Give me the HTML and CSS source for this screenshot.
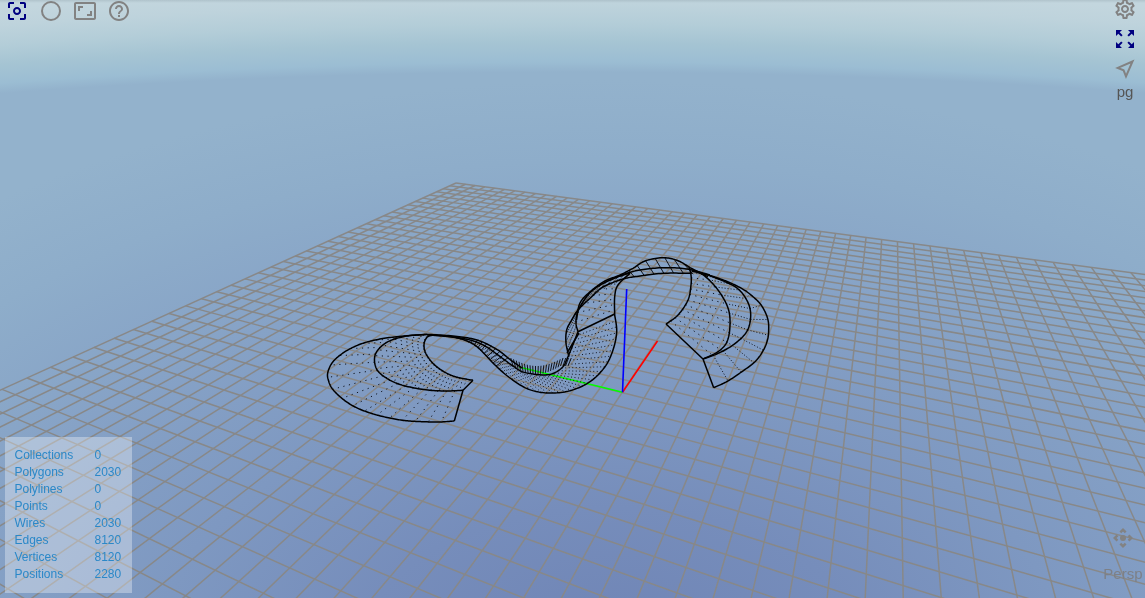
FILE: index.html
```html
<!DOCTYPE html>
<html lang="en">
<head>
<meta charset="utf-8">
<title>3D Viewer</title>
<link rel="stylesheet" href="styles.css">
</head>
<body>
<main class="viewer">
  <canvas class="scene" id="scene" width="1145" height="598"></canvas>
  <div class="overlay">
    <header class="row row-top">
      <nav class="toolbar">
        <svg class="icon active" viewBox="0 0 24 24"><path d="M5 15H3v4c0 1.100.9 2 2 2h4v-2H5v-4zM5 5h4V3H5c-1.100 0-2 .9-2 2v4h2V5zm14-2h-4v2h4v4h2V5c0-1.100-.9-2-2-2zm0 16h-4v2h4c1.100 0 2-.9 2-2v-4h-2v4zM12 8c-2.210 0-4 1.790-4 4s1.790 4 4 4 4-1.790 4-4-1.790-4-4-4zm0 6c-1.100 0-2-.9-2-2s.9-2 2-2 2 .9 2 2-.9 2-2 2z"/></svg>
        <svg class="icon" viewBox="0 0 24 24"><path d="M12 2a10 10 0 1 0 0 20a10 10 0 1 0 0-20zm0 18a8 8 0 1 1 0-16a8 8 0 1 1 0 16z"/></svg>
        <svg class="icon" viewBox="0 0 24 24"><path d="M19 12h-2v3h-3v2h5v-5zM7 9h3V7H5v5h2V9zm14-6H3c-1.100 0-2 .9-2 2v14c0 1.100.9 2 2 2h18c1.100 0 2-.9 2-2V5c0-1.100-.9-2-2-2zm0 16.010H3V4.990h18v14.020z"/></svg>
        <svg class="icon" viewBox="0 0 24 24"><path d="M11 18h2v-2h-2v2zm1-16C6.480 2 2 6.480 2 12s4.480 10 10 10 10-4.480 10-10S17.520 2 12 2zm0 18c-4.410 0-8-3.590-8-8s3.590-8 8-8 8 3.590 8 8-3.590 8-8 8zm0-14c-2.210 0-4 1.790-4 4h2c0-1.100.9-2 2-2s2 .9 2 2c0 2-3 1.750-3 5h2c0-2.250 3-2.500 3-5 0-2.210-1.790-4-4-4z"/></svg>
      </nav>
      <nav class="sidebar">
        <svg class="icon" viewBox="0 0 24 24"><path fill-rule="evenodd" d="M19.430 12.980c.04-.32.07-.64.07-.98 0-.34-.03-.66-.07-.98l2.110-1.650c.19-.15.24-.42.12-.64l-2-3.460c-.09-.16-.26-.25-.44-.25-.06 0-.12.01-.17.03l-2.490 1c-.52-.4-1.080-.73-1.690-.98l-.38-2.650C14.460 2.180 14.250 2 14 2h-4c-.25 0-.46.18-.49.42l-.38 2.650c-.61.25-1.170.59-1.690.98l-2.490-1c-.06-.02-.12-.03-.18-.03-.17 0-.34.09-.43.25l-2 3.460c-.13.22-.07.49.12.64l2.110 1.650c-.04.32-.07.65-.07.98 0 .33.03.66.07.98l-2.110 1.650c-.19.15-.24.42-.12.64l2 3.460c.09.16.26.25.44.25.06 0 .12-.01.17-.03l2.490-1c.52.4 1.080.73 1.690.98l.38 2.650c.03.24.24.42.49.42h4c.25 0 .46-.18.49-.42l.38-2.650c.61-.25 1.170-.59 1.690-.98l2.490 1c.06.02.12.03.18.03.17 0 .34-.09.43-.25l2-3.460c.12-.22.07-.49-.12-.64l-2.110-1.650zm-1.980-1.710c.04.31.05.52.05.73 0 .21-.02.43-.05.73l-.14 1.130.89.7 1.080.84-.7 1.210-1.270-.51-1.040-.42-.9.68c-.43.32-.84.56-1.250.73l-1.060.43-.16 1.130-.2 1.350h-1.400l-.19-1.350-.16-1.130-1.060-.43c-.43-.18-.83-.41-1.230-.71l-.91-.7-1.060.43-1.270.51-.7-1.210 1.080-.84.89-.7-.14-1.130c-.03-.31-.05-.54-.05-.74s.02-.43.05-.73l.14-1.130-.89-.7-1.080-.84.7-1.210 1.270.51 1.040.42.9-.68c.43-.32.84-.56 1.250-.73l1.060-.43.16-1.130.2-1.350h1.390l.19 1.350.16 1.130 1.060.43c.43.18.83.41 1.230.71l.91.7 1.060-.43 1.270-.51.7 1.210-1.070.85-.89.7.14 1.130zM12 8c-2.210 0-4 1.790-4 4s1.790 4 4 4 4-1.790 4-4-1.790-4-4-4zm0 6c-1.100 0-2-.9-2-2s.9-2 2-2 2 .9 2 2-.9 2-2 2z"/></svg>
        <svg class="icon active" viewBox="0 0 24 24"><path d="M15 3l2.300 2.300-2.890 2.870 1.420 1.420L18.700 6.700 21 9V3zM3 9l2.300-2.300 2.870 2.890 1.420-1.420L6.700 5.300 9 3H3zm6 12l-2.300-2.300 2.890-2.870-1.420-1.420L5.300 17.300 3 15v6zm12-6l-2.300 2.300-2.870-2.890-1.420 1.420 2.890 2.870L15 21h6z"/></svg>
        <svg class="icon" viewBox="0 0 24 24"><path class="outline" d="M19.500 4.500L4.700 10.900L10.600 13.300L13 19.300Z"/></svg>
        <span class="mode">pg</span>
      </nav>
    </header>
    <footer class="row row-bottom">
      <dl class="stats">
        <dt>Collections</dt><dd>0</dd>
        <dt>Polygons</dt><dd>2030</dd>
        <dt>Polylines</dt><dd>0</dd>
        <dt>Points</dt><dd>0</dd>
        <dt>Wires</dt><dd>2030</dd>
        <dt>Edges</dt><dd>8120</dd>
        <dt>Vertices</dt><dd>8120</dd>
        <dt>Positions</dt><dd>2280</dd>
      </dl>
      <div class="camera">
        <svg class="icon" viewBox="0 0 24 24"><path d="M15.540 5.540L13.770 7.300 12 5.540 10.230 7.300 8.460 5.540 12 2zm2.920 10l-1.760-1.770L18.460 12l-1.760-1.770 1.760-1.770L22 12zm-10 2.920l1.770-1.760L12 18.460l1.770-1.760 1.770 1.760L12 22zm-2.920-10l1.760 1.770L5.540 12l1.760 1.770-1.760 1.770L2 12z"/><circle cx="12" cy="12" r="3"/></svg>
        <span>Persp</span>
      </div>
    </footer>
  </div>
</main>
<script src="scene.js"></script>
</body>
</html>
```

FILE: styles.css
```css
body {
  margin: 0;
  overflow: hidden;
  font-family: "Liberation Sans", Arial, sans-serif;
}

.viewer {
  display: grid;
  width: 1145px;
  height: 598px;
  background:
    linear-gradient(rgba(120, 140, 150, 0.25), transparent 3px),
    radial-gradient(circle 7900px at 575px 7802px, transparent 7730px, #9bbdd3 7740px, #a5c4d3 7759px, #b3cdd8 7778px, #bed3dc 7798px, #c3d6de 7815px),
    radial-gradient(ellipse 1000px 570px at 610px 650px, #6f84b5 0%, #768dbb 25%, #7e98c1 45%, #86a2c6 66%, #8eadca 86%, #93b2cc 100%);
}

.scene,
.overlay {
  grid-area: 1 / 1;
}

.overlay {
  display: flex;
  flex-direction: column;
  justify-content: space-between;
  height: 598px;
}

.row {
  display: flex;
  justify-content: space-between;
}

.row-top {
  align-items: flex-start;
}

.row-bottom {
  align-items: flex-end;
}

.icon {
  display: block;
  width: 24px;
  height: 24px;
  fill: #828282;
}

.active {
  fill: #000080;
}

.outline {
  fill: none;
  stroke: #828282;
  stroke-width: 2;
}

.toolbar {
  display: flex;
  gap: 10px;
  margin: -1px 0 0 5px;
}

.sidebar {
  display: flex;
  flex-direction: column;
  align-items: center;
  gap: 6px;
  margin: -3px 8px 0 0;
}

.mode {
  margin-top: -4px;
  font-size: 15px;
  line-height: 18px;
  color: #555;
}

.stats {
  display: grid;
  grid-template-columns: 80px 37.500px;
  grid-auto-rows: 17px;
  box-sizing: border-box;
  width: 127px;
  height: 156px;
  margin: 0 0 5px 5px;
  padding: 10px 0 0 9.500px;
  background: rgba(255, 255, 255, 0.33);
  color: #2b88c8;
  font-size: 12px;
  line-height: 17px;
}

.stats dd {
  margin: 0;
}

.camera {
  display: flex;
  flex-direction: column;
  align-items: center;
  gap: 15px;
  margin: 0 2.500px 15px 0;
  font-size: 15px;
  line-height: 18px;
  color: #7d8087;
}
```

FILE: scene.js
```js
const ctx = document.getElementById('scene').getContext('2d');

// Ground plane: homography from four grid nodes to screen positions.
const nodes = [
  [-25, -25, 456, 183],
  [24, -25, 1131, 272.7],
  [-25, 4, 151.7, 321.3],
  [5.43, 8, 700, 572.3]
];

function solve(rows) {
  const n = rows.length;
  for (let c = 0; c < n; c++) {
    let p = c;
    for (let r = c + 1; r < n; r++) if (Math.abs(rows[r][c]) > Math.abs(rows[p][c])) p = r;
    [rows[c], rows[p]] = [rows[p], rows[c]];
    for (let r = 0; r < n; r++) {
      if (r === c) continue;
      const f = rows[r][c] / rows[c][c];
      for (let k = c; k <= n; k++) rows[r][k] -= f * rows[c][k];
    }
  }
  return rows.map((row, i) => row[n] / row[i]);
}

const h = solve(nodes.flatMap(([i, j, x, y]) => [
  [i, j, 1, 0, 0, 0, -x * i, -x * j, x],
  [0, 0, 0, i, j, 1, -y * i, -y * j, y]
]));

function project(i, j) {
  const w = h[6] * i + h[7] * j + 1;
  return [(h[0] * i + h[1] * j + h[2]) / w, (h[3] * i + h[4] * j + h[5]) / w, w];
}

function line(a, b) {
  ctx.beginPath();
  ctx.moveTo(a[0], a[1]);
  ctx.lineTo(b[0], b[1]);
  ctx.stroke();
}

// Last node along a grid line that is still in front of the camera.
function reach(at) {
  let t = 25;
  while (at(t)[2] < 0.05) t -= 0.25;
  return at(t);
}

ctx.strokeStyle = '#888888';
ctx.lineWidth = 1.5;
for (let k = -25; k <= 25; k++) {
  line(project(k, -25), reach(t => project(k, t)));
  line(project(-25, k), reach(t => project(t, k)));
}

// Axes
ctx.lineWidth = 1.6;
ctx.strokeStyle = '#00ff00';
line([622.5, 392.3], [519, 367]);
ctx.strokeStyle = '#ff0000';
line([622.5, 392.3], [657.5, 341]);
ctx.strokeStyle = '#0000ff';
line([622.5, 392.3], [626.7, 289]);

// Smooth polyline through the given points.
function smooth(p) {
  const out = [];
  for (let i = 0; i < p.length - 1; i++) {
    const a = p[Math.max(i - 1, 0)], b = p[i], c = p[i + 1], d = p[Math.min(i + 2, p.length - 1)];
    for (let s = 0; s < 12; s++) {
      const t = s / 12;
      out.push([0, 1].map(k => 0.5 * (2 * b[k] + (c[k] - a[k]) * t +
        (2 * a[k] - 5 * b[k] + 4 * c[k] - d[k]) * t * t +
        (3 * b[k] - a[k] - 3 * c[k] + d[k]) * t * t * t)));
    }
  }
  out.push(p[p.length - 1]);
  return out;
}

function draw(p) {
  ctx.beginPath();
  p.forEach(q => ctx.lineTo(q[0], q[1]));
  ctx.stroke();
}

function resample(p, n) {
  const len = [0];
  for (let i = 1; i < p.length; i++) len.push(len[i - 1] + Math.hypot(p[i][0] - p[i - 1][0], p[i][1] - p[i - 1][1]));
  const res = [];
  for (let k = 0; k <= n; k++) {
    const d = len[len.length - 1] * k / n;
    let i = 1;
    while (i < p.length - 1 && len[i] < d) i++;
    const t = (d - len[i - 1]) / (len[i] - len[i - 1] || 1);
    res.push([p[i - 1][0] + (p[i][0] - p[i - 1][0]) * t, p[i - 1][1] + (p[i][1] - p[i - 1][1]) * t]);
  }
  return res;
}

function ribs(a, b, n, dash) {
  const p = resample(a, n), q = resample(b, n);
  ctx.setLineDash(dash);
  for (let k = 1; k < n; k++) line(p[k], q[k]);
  ctx.setLineDash([]);
}

const c = {
  leftOuter: [[454.3, 421], [439, 422], [423, 421.7], [406, 420.7], [391, 418.3], [375, 414.5], [360, 409.3], [349, 403.5], [340, 396.7], [332.5, 389], [328.8, 381.5], [327.7, 373], [333, 361.7], [345, 351.7], [360, 344.3], [376.7, 339.7], [396.7, 336.7], [426.7, 334.3]],
  leftMid: [[463, 390.3], [443, 391], [420, 389], [396.7, 383.3], [380, 373.3], [374.7, 362.7], [376.7, 351.7], [388, 341.7], [406.7, 336], [427, 334.5]],
  leftInner: [[473, 380.3], [453, 376], [436.7, 366.7], [426.7, 355], [424, 345], [427, 337.3], [433, 335]],
  bridgeTop: [[426.7, 334.3], [453, 336], [477, 340], [496.7, 349.3], [510, 359.5], [522, 368]],
  bridgeMid: [[427, 335], [450, 336.500], [470, 340], [485, 346], [502, 358], [513, 366], [525, 372.5], [548, 374.7], [561.7, 368], [568, 356.7], [578, 331.7]],
  bridgeLow: [[433, 335], [455, 337.500], [467, 341], [478, 347.5], [495, 365], [510, 378], [528, 389], [548, 393], [570, 390.7], [590, 381.7], [605, 366.7], [613, 350], [616.7, 331.7], [614.7, 315]],
  neck: [[614.7, 315], [614.7, 296.7], [618, 285], [630, 273.3]],
  riseInner: [[578, 331.7], [576, 323.3], [577.3, 313.3], [583, 301.7], [593, 290], [610, 280], [630, 272.7]],
  riseOuter: [[569, 356.7], [566, 343], [566.7, 330], [571.7, 320], [578, 310], [591.7, 296.7], [603, 287], [623, 279], [640, 276], [663, 273.3], [691.7, 273.3]],
  riseTop: [[576.500, 320], [580, 303], [591, 291], [605, 281], [620, 275], [633, 268.3], [645, 261], [663, 257.7], [678, 260.7], [691.7, 268.5], [708, 276.7]],
  archMid: [[610, 280], [625, 274], [640, 270], [663, 267.7], [686.7, 269], [710, 275]],
  rightOuter: [[691.700, 271], [708, 275], [722, 279.5], [735, 285], [745, 290.5], [753, 296.7], [760, 303.5], [765, 311.7], [768, 320], [768.7, 328.3], [767.7, 339], [763.5, 350], [755, 361.7], [740, 373], [727, 381.5], [713.7, 387.7]],
  rightMid: [[710, 275.7], [735, 286.7], [746.7, 300], [750.7, 315], [746.7, 331.7], [733, 345], [716.7, 354], [703, 359]],
  rightInner: [[692, 270], [704, 275.5], [718, 290], [728, 308], [730, 325], [727, 341.7], [718, 351.7], [703, 359]],
  rightEdge: [[689, 267], [691, 275], [691, 285], [688, 300], [678, 315], [666, 324]]
};
for (const k in c) c[k] = smooth(c[k]);

ctx.strokeStyle = '#10141c';
ctx.lineWidth = 1;
const dots = [1.2, 4.5];
ribs(c.leftInner, c.leftMid, 25, dots);
ribs(c.leftMid, c.leftOuter, 20, dots);
ribs(c.rightEdge, c.rightInner, 12, dots);
ribs(c.rightInner, c.rightMid, 12, [1, 2]);
ribs(c.rightMid, c.rightOuter, 12, [1, 2]);
ribs(c.bridgeMid, c.bridgeLow, 42, [1, 2.5]);
ribs(c.riseInner, c.neck, 9, dots);
ribs(c.riseInner, smooth([[569, 356.7], [566, 343], [566.7, 330], [571.7, 320], [578, 310], [591.7, 296.7], [623, 279]]), 14, [1, 1]);
ribs(smooth([[620, 275], [645, 261], [663, 257.7], [678, 260.7], [691.7, 268.5]]), smooth([[625, 279], [645, 275.5], [663, 273.3], [680, 273.3], [703, 275]]), 8, []);
ribs(smooth([[467, 338], [490, 345], [512, 361]]), smooth([[467, 341], [480, 349.5], [499, 369]]), 10, []);

// Short spokes of the inner rim
for (let k = 0; k <= 22; k++) {
  const x = 513 + k * 2.5;
  const y = 366 + 8 * Math.sin(Math.PI * Math.min(k / 19, 1));
  line([x, y], [x + (k - 9) * 0.25, y - 8]);
}

ctx.strokeStyle = '#000000';
ctx.lineWidth = 1.5;
ctx.lineJoin = 'round';
for (const k in c) draw(c[k]);
draw([[473, 380.3], [463, 390.3], [454.3, 421]]);
draw([[578, 331.7], [614.7, 314]]);
draw([[666, 324], [703, 359], [713.7, 387.7]]);
draw([[567, 353], [579, 333]]);
```
